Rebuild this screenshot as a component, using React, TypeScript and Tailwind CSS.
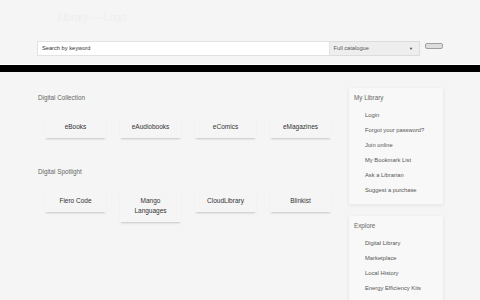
import React from "react";

const collection = ["eBooks", "eAudiobooks", "eComics", "eMagazines"];
const spotlight = ["Fiero Code", "Mango Languages", "CloudLibrary", "Blinkist"];

const myLibrary = [
  "Login",
  "Forgot your password?",
  "Join online",
  "My Bookmark List",
  "Ask a Librarian",
  "Suggest a purchase",
];
const explore = ["Digital Library", "Marketplace", "Local History", "Energy Efficiency Kits"];

const Tile = ({ label }: { label: string }) => (
  <a className="block bg-[#f5f5f5] px-[8px] py-[6px] text-center text-[6.5px] leading-[10px] text-[#333] shadow-[0_2px_2px_-1px_rgba(0,0,0,0.2)]">
    {label === "Mango Languages" ? (
      <>
        Mango
        <br />
        Languages
      </>
    ) : (
      label
    )}
  </a>
);

const Panel = ({ title, items, pad = "pb-[6px]" }: { title: string; items: string[]; pad?: string }) => (
  <div className={`bg-[#f8f8f8] pt-[5px] shadow-[0_1px_4px_rgba(0,0,0,0.08)] ${pad}`}>
    <h3 className="pl-[5px] text-[6.3px] leading-[10px] text-[#666]">{title}</h3>
    <ul className="mt-[5px]">
      {items.map((item) => (
        <li key={item} className="h-[15px] pl-[16px] text-[5.8px] leading-[15px] text-[#555]">
          {item}
        </li>
      ))}
    </ul>
  </div>
);

export default function App() {
  return (
    <div className="h-screen overflow-hidden bg-[#f5f5f5] font-['Liberation_Sans',Arial,sans-serif]">
      {/* Header with logo + search */}
      <header className="h-[65px] border-b border-white">
        <div className="mx-auto w-[406px] pt-[11px]">
          <div className="ml-[21px] h-[14px] text-[10px] leading-[14px] text-[#eeeeee]">Library — Logo</div>
          <div className="mt-[16px] flex items-start">
            <div className="flex h-[15px] w-[294px] items-center border border-[#e2e2e2] bg-white pl-[4px] text-[5.7px] text-[#333]">
              Search by keyword
            </div>
            <div className="flex h-[15px] w-[91px] items-center justify-between border border-l-0 border-[#dcdcdc] bg-[#eeeeee] pl-[4px] pr-[6px] text-[5.7px] text-[#555]">
              <span>Full catalogue</span>
              <span className="text-[4px] text-[#444]">▼</span>
            </div>
            <button className="ml-[5px] mt-[2px] h-[6px] w-[18px] rounded-[2px] border border-[#a0a0a0] bg-[#dddddd]" />
          </div>
        </div>
      </header>
      <div className="h-[7px] bg-black" />

      <main className="mx-auto flex w-[406px] gap-[10px] pt-[16px]">
        <section className="flex-1 pt-[5px]">
          <h2 className="pl-[1px] text-[6.3px] leading-[10px] text-[#666]">Digital Collection</h2>
          <div className="ml-[8px] mt-[13px] grid w-[286px] grid-cols-4 items-start gap-[14px]">
            {collection.map((c) => (
              <Tile key={c} label={c} />
            ))}
          </div>
          <h2 className="mt-[29px] pl-[1px] text-[6.3px] leading-[10px] text-[#666]">Digital Spotlight</h2>
          <div className="ml-[8px] mt-[13px] grid w-[286px] grid-cols-4 items-start gap-[14px]">
            {spotlight.map((c) => (
              <Tile key={c} label={c} />
            ))}
          </div>
        </section>

        <aside className="flex w-[94px] flex-col gap-[12px]">
          <Panel title="My Library" items={myLibrary} />
          <Panel title="Explore" items={explore} pad="pb-[20px]" />
        </aside>
      </main>
    </div>
  );
}
